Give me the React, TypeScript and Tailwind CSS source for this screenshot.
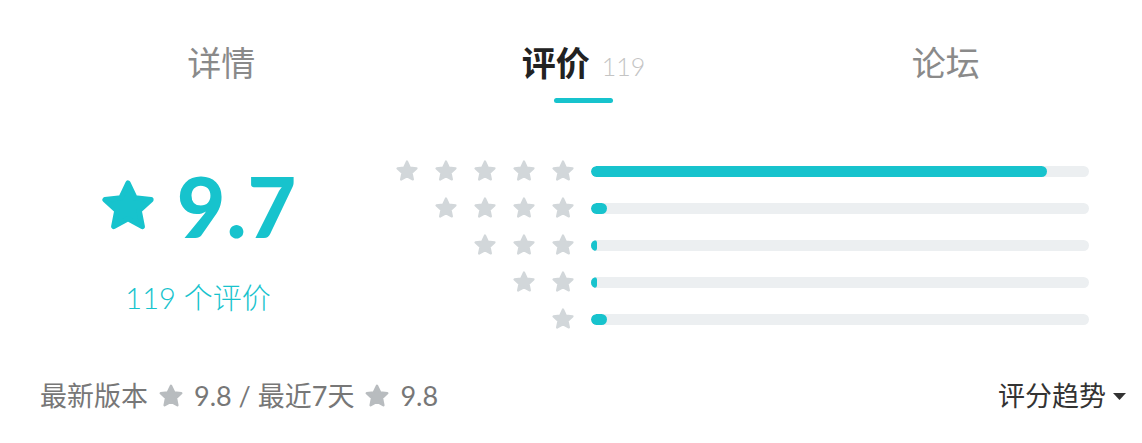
import { ReactNode } from "react";

const TEAL = "#17c3cd";

const dist: Array<{ stars: number; pct: number }> = [
  { stars: 5, pct: 91.5 },
  { stars: 4, pct: 3.2 },
  { stars: 3, pct: 1.2 },
  { stars: 2, pct: 1.2 },
  { stars: 1, pct: 3.2 },
];

function Star({ size, color }: { size: number; color: string }) {
  return (
    <svg width={size} height={size} viewBox="0 0 24 24" className="shrink-0">
      <polygon
        points="12,2.5 14.9,8.6 21.5,9.4 16.6,13.9 17.9,20.5 12,17.2 6.1,20.5 7.4,13.9 2.5,9.4 9.1,8.6"
        fill={color}
        stroke={color}
        strokeWidth={2.2}
        strokeLinejoin="round"
      />
    </svg>
  );
}

function Tab({ children, active }: { children: ReactNode; active?: boolean }) {
  return (
    <div className="flex flex-col items-center">
      <div className="flex items-baseline h-[46px]">{children}</div>
      <div
        className={`mt-[12px] h-[5px] w-[59px] rounded-full ${active ? "bg-[#17c3cd]" : "bg-transparent"}`}
      />
    </div>
  );
}

export default function App() {
  return (
    <div
      className="w-[1142px] h-[443px] bg-white pl-10 pr-[15px] overflow-hidden"
      style={{ fontFamily: 'Lato, "Noto Sans CJK SC", sans-serif' }}
    >
      <div className="grid grid-cols-3 pt-[40px]">
        <Tab>
          <span className="text-[34px] text-[#8a8a8a] leading-[46px]">详情</span>
        </Tab>
        <Tab active>
          <span className="text-[34px] font-bold text-[#222] leading-[46px]">评价</span>
          <span className="ml-[12px] text-[25px] font-light text-[#c4c4c4]">119</span>
        </Tab>
        <Tab>
          <span className="text-[34px] text-[#8a8a8a] leading-[46px]">论坛</span>
        </Tab>
      </div>

      <div className="flex mt-[56px]">
        <div className="w-[316px] flex flex-col items-center">
          <div className="flex items-center gap-[20px] h-[90px] mt-[2px]">
            <Star size={58} color={TEAL} />
            <span className="text-[84px] font-black leading-none text-[#17c3cd] tracking-[1px]">
              9.7
            </span>
          </div>
          <div className="mt-[32px] text-[29px] font-light text-[#17c3cd] leading-none">
            119 个评价
          </div>
        </div>

        <div className="flex-1 flex flex-col gap-[13px] pl-[36px]">
          {dist.map((d) => (
            <div key={d.stars} className="flex items-center h-[24px]">
              <div className="w-[183px] flex justify-end gap-[15px]">
                {Array.from({ length: d.stars }).map((_, i) => (
                  <Star key={i} size={24} color="#d2d7da" />
                ))}
              </div>
              <div className="ml-[16px] w-[498px] h-[11px] rounded-full bg-[#eceff1] overflow-hidden">
                <div
                  className="h-full rounded-full bg-[#17c3cd]"
                  style={{ width: `${d.pct}%` }}
                />
              </div>
            </div>
          ))}
        </div>
      </div>

      <div className="flex items-center justify-between mt-[45px] text-[27px]">
        <div className="flex items-center text-[#777]">
          <span>最新版本</span>
          <span className="ml-[10px]"><Star size={26} color="#b8bcbf" /></span>
          <span className="ml-[10px]">9.8 / 最近7天</span>
          <span className="ml-[10px]"><Star size={26} color="#b8bcbf" /></span>
          <span className="ml-[10px]">9.8</span>
        </div>
        <div className="flex items-center text-[#333]">
          <span>评分趋势</span>
          <svg width="15" height="9" viewBox="0 0 15 9" className="ml-[6px]">
            <polygon points="1,1 14,1 7.5,8" fill="#333" />
          </svg>
        </div>
      </div>
    </div>
  );
}
